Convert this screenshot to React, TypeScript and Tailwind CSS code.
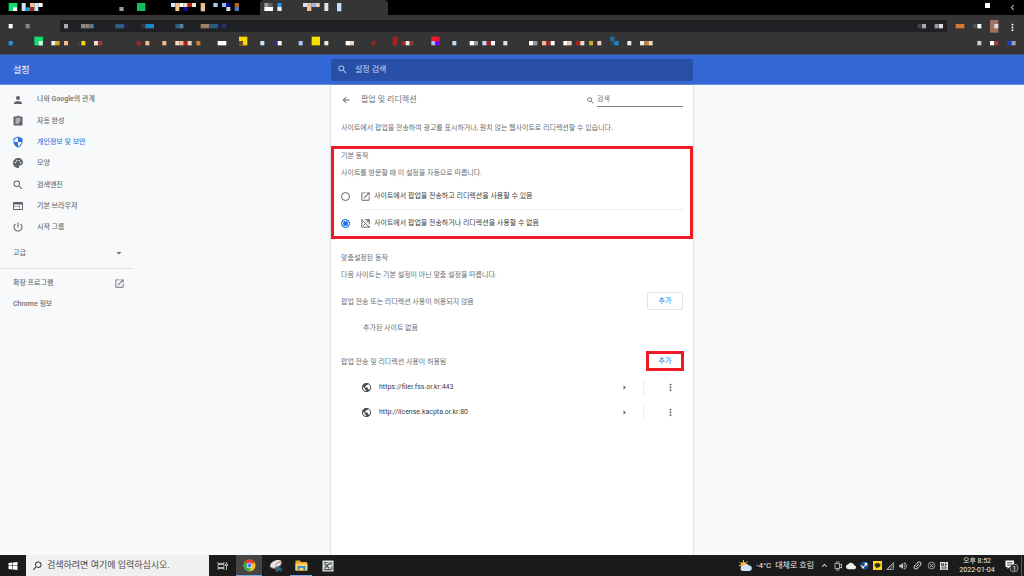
import React, { useState } from 'react';
import {
  MdArrowBack,
  MdArrowDropDown,
  MdArrowRight,
  MdAssignment,
  MdCloud,
  MdChevronLeft,
  MdExpandLess,
  MdLink,
  MdMoreVert,
  MdOpenInNew,
  MdOutlineCancel,
  MdPalette,
  MdPerson,
  MdPowerSettingsNew,
  MdPublic,
  MdSearch,
  MdSecurity,
  MdVolumeUp,
  MdWeb,
} from 'react-icons/md';
import { clsx } from 'clsx';

// x, y, width, height, colour (three units to the pixel)
type Cell = [number, number, number, number, string];

const row = (y: number, items: [number, number, string][]): Cell[] =>
  items.map(([x, w, color]) => [x, y, w, 13, color]);

const tabCells: Cell[] = [
  [26, 9, 26, 24, '#12e06c'], [39, 22, 12, 11, '#ffffff'],
  [65, 9, 12, 24, '#cfe6fa'], [77, 22, 13, 11, '#2196e8'],
  [90, 9, 13, 12, '#f3c57d'], [90, 21, 13, 12, '#a82222'],
  [103, 9, 12, 24, '#cfe6fa'], [115, 9, 13, 12, '#ffffff'],
  [358, 21, 13, 12, '#999999'], [411, 9, 25, 24, '#0fbf5c'],
  [513, 9, 13, 12, '#cfe6fa'], [526, 9, 12, 24, '#f3c58a'], [538, 9, 13, 12, '#ffffff'],
  [550, 21, 13, 12, '#0c0ca0'], [551, 9, 12, 12, '#f3dcc0'], [563, 9, 13, 12, '#a82222'],
  [576, 9, 12, 12, '#f5e6d6'], [602, 9, 13, 25, '#f0bd92'], [640, 9, 13, 12, '#a9cdf5'],
  [666, 9, 12, 12, '#8fbdf0'], [678, 9, 13, 12, '#0c0ca0'], [679, 21, 12, 12, '#cfd9ee'],
  [704, 9, 13, 12, '#b0661a'], [704, 21, 13, 12, '#4a79c0'],
];

const activeTabCells: Cell[] = [
  [13, 9, 13, 12, '#999999'], [26, 9, 12, 12, '#606060'], [13, 21, 26, 12, '#ffffff'],
  [52, 9, 13, 12, '#2196e8'], [52, 21, 13, 12, '#eeeeee'],
  [129, 9, 12, 12, '#cfe6fa'], [141, 9, 13, 24, '#f0bd92'], [154, 9, 13, 12, '#8fb8ec'],
  [167, 9, 12, 12, '#f0d0ba'], [193, 9, 12, 24, '#eee0d6'], [231, 9, 13, 25, '#c4dcf8'],
];

const navCells: Cell[] = row(27, [[26, 12, '#ffffff'], [77, 12, '#888888']]);

const addressCells: Cell[] = row(12, [
  [12, 12, '#aaaaaa'], [63, 13, '#888888'], [76, 13, '#a47a64'], [89, 12, '#4a80a0'],
  [166, 26, '#2f5f85'], [192, 12, '#1d2350'], [243, 12, '#333333'], [256, 26, '#1e87cc'],
  [346, 12, '#2b5c80'], [358, 12, '#5d7f98'], [422, 26, '#a08060'], [448, 26, '#2b5c80'],
  [474, 12, '#1a2250'], [487, 12, '#28335f'],
]);

const addressEndCells: Cell[] = row(12, [
  [2, 12, '#444444'], [15, 12, '#aaaaaa'], [53, 12, '#999999'], [66, 12, '#dddddd'],
]);

const extensionCells: Cell[] = [
  [26, 27, 26, 13, '#d97a35'], [79, 27, 10, 13, '#555555'], [91, 27, 12, 13, '#ffffff'],
  [129, 15, 25, 38, '#a0735f'], [142, 27, 12, 13, '#dddddd'],
];

const bookmarkCells: Cell[] = [
  [103, 2, 26, 26, '#12e06c'], [717, 2, 25, 26, '#f7d808'], [935, 2, 25, 26, '#f7e000'],
  [1178, 2, 14, 26, '#a82222'], [1294, 2, 25, 13, '#f01828'], [1831, 2, 12, 13, '#1a70a8'],
  ...row(15, [
    [26, 12, '#2196e8'], [116, 12, '#eeeeee'], [154, 13, '#eeeeee'], [167, 12, '#d3a722'],
    [192, 12, '#f0bd92'], [233, 6, '#444444'], [244, 12, '#f7d808'], [282, 12, '#eee0d6'],
    [295, 12, '#a63a33'], [410, 12, '#a82222'], [436, 12, '#f0bd92'], [487, 12, '#f0bd92'],
    [526, 12, '#f3dcc0'], [538, 13, '#f0bd92'], [551, 12, '#a82222'], [563, 12, '#f0d0ba'],
    [589, 12, '#d08020'], [653, 26, '#ffffff'], [717, 12, '#6b4423'],
    [781, 12, '#cfe6fa'], [820, 12, '#3a2a90'], [833, 12, '#ffffff'], [896, 12, '#a9c8f5'],
    [973, 12, '#f5e6d6'], [1037, 13, '#ffffff'], [1050, 12, '#f0d0ba'], [1114, 12, '#8a2a20'],
    [1204, 13, '#a82222'], [1217, 12, '#e6eef8'], [1229, 12, '#8a3a33'], [1294, 12, '#a9b8f5'],
    [1306, 13, '#8a00f0'], [1357, 12, '#c4dcf8'], [1409, 13, '#ffffff'], [1422, 12, '#999999'],
    [1447, 13, '#c4dcf8'], [1460, 13, '#a82222'], [1473, 12, '#ffffff'], [1510, 12, '#eee0d6'],
    [1587, 13, '#ffffff'], [1600, 12, '#999999'], [1626, 13, '#f0bd92'], [1639, 13, '#a82222'],
    [1652, 12, '#ffffff'], [1690, 13, '#ffffff'], [1703, 12, '#f0d0ba'], [1728, 13, '#a82222'],
    [1741, 12, '#f3dcc0'], [1767, 12, '#d3a722'], [1792, 12, '#f0d0c6'], [1831, 12, '#284850'],
    [1843, 13, '#1e87cc'], [1882, 12, '#eeeeee'], [1920, 13, '#eeeeee'], [1933, 13, '#d08030'],
    [1946, 12, '#f0dcc6'],
  ]),
];

const bookmarkEndCells: Cell[] = row(15, [
  [10, 12, '#cccccc'], [48, 13, '#ffffff'], [61, 12, '#a83a33'], [100, 13, '#2040d0'], [113, 12, '#a0a0b0'],
]);

interface MosaicProps {
  cells: Cell[];
  width: number;
  height: number;
}

function Mosaic({ cells, width, height }: MosaicProps) {
  return (
    <svg width={width} height={height} viewBox={`0 0 ${width * 3} ${height * 3}`} className="shrink-0" aria-hidden="true">
      {cells.map(([x, y, w, h, color]) => (
        <rect key={`${x}-${y}`} x={x} y={y} width={w} height={h} fill={color} />
      ))}
    </svg>
  );
}

function BrowserChrome() {
  return (
    <div className="border-b border-[#4a5470] bg-[#353535]">
      <div className="flex h-[15px] bg-black">
        <Mosaic cells={tabCells} width={260} height={15} />
        <div className="w-[128px] rounded-t bg-[#353535]">
          <Mosaic cells={activeTabCells} width={128} height={15} />
        </div>
        <div className="ml-auto flex items-center">
          <span className="mb-[5px] mr-[17px] size-[5px] bg-white" />
          <button type="button" aria-label="이전" className="mr-1.5 text-[#cccccc]">
            <MdChevronLeft size={11} />
          </button>
        </div>
      </div>
      <div className="flex h-[21px] items-center">
        <Mosaic cells={navCells} width={60} height={21} />
        <div className="flex h-3 flex-1 justify-between bg-[#202124]">
          <Mosaic cells={addressCells} width={180} height={12} />
          <Mosaic cells={addressEndCells} width={30} height={12} />
        </div>
        <Mosaic cells={extensionCells} width={60} height={21} />
        <button type="button" aria-label="메뉴" className="mr-1.5 mt-1 text-white">
          <MdMoreVert size={11} />
        </button>
      </div>
      <div className="flex h-[18px] justify-between">
        <Mosaic cells={bookmarkCells} width={660} height={18} />
        <Mosaic cells={bookmarkEndCells} width={50} height={18} />
      </div>
    </div>
  );
}

const menuItems = [
  { label: '나와 Google의 관계', icon: MdPerson },
  { label: '자동 완성', icon: MdAssignment },
  { label: '개인정보 및 보안', icon: MdSecurity, active: true },
  { label: '모양', icon: MdPalette },
  { label: '검색엔진', icon: MdSearch },
  { label: '기본 브라우저', icon: MdWeb },
  { label: '시작 그룹', icon: MdPowerSettingsNew },
];

function Sidebar() {
  return (
    <nav className="w-[133px] pt-1 font-medium text-[#6a6e73]">
      <div className="flex h-[149px] flex-col">
        {menuItems.map(({ label, icon: Icon, active }) => (
          <a
            key={label}
            href="#"
            className={clsx('flex flex-1 items-center gap-[13px] pl-3', active && 'text-[#3b7ddd]')}
          >
            <Icon size={12} className={active ? 'text-[#2a6fdb]' : 'text-[#5f6368]'} />
            {label}
          </a>
        ))}
      </div>
      <button type="button" className="flex h-[31px] w-full items-center justify-between border-b border-[#e3e5e8] pl-[13px] pr-2">
        고급
        <MdArrowDropDown size={12} />
      </button>
      <a href="#" className="mt-1 flex h-[21px] items-center justify-between pl-[13px] pr-2">
        확장 프로그램
        <MdOpenInNew size={11} />
      </a>
      <a href="#" className="flex h-[21px] items-center pl-[13px]">Chrome 정보</a>
    </nav>
  );
}

function PopupBlockedIcon() {
  return (
    <svg width="11" height="11" viewBox="0 0 24 24" fill="none" stroke="currentColor" strokeWidth="2" className="shrink-0">
      <path d="M10 4h10v10M20 17v3H4V4h2M20 4l-6 6M11 13l-4 4M3 3l18 18M14 4h6v6" />
    </svg>
  );
}

interface BehaviorOptionProps {
  label: string;
  icon: React.ReactNode;
  checked: boolean;
  onChange: () => void;
}

function BehaviorOption({ label, icon, checked, onChange }: BehaviorOptionProps) {
  return (
    <label className="flex h-[26px] items-center text-[#3c4043]">
      <input
        type="radio"
        name="behavior"
        checked={checked}
        onChange={onChange}
        className="size-[9px] shrink-0 appearance-none rounded-full border border-[#5f6368] checked:border-[#1a73e8] checked:bg-[#1a73e8] checked:shadow-[inset_0_0_0_1px_white]"
      />
      <span className="ml-[10px] mr-[3px] text-[#5f6368]">{icon}</span>
      {label}
    </label>
  );
}

const sites = ['https://filer.fss.or.kr:443', 'http://license.kacpta.or.kr:80'];

function SettingsPanel() {
  const [blocked, setBlocked] = useState(true);

  return (
    <main className="bg-white text-[#6a6e73] shadow-[0_0_2px_rgba(0,0,0,0.3)]">
      <div className="flex h-[30px] items-center px-[10px]">
        <button type="button" aria-label="뒤로" className="text-[#5f6368]">
          <MdArrowBack size={10} />
        </button>
        <h1 className="ml-[10px] text-[8px]">팝업 및 리디렉션</h1>
        <label htmlFor="site-search" className="ml-auto mr-[2px]">
          <MdSearch size={9} />
        </label>
        <input
          id="site-search"
          type="text"
          placeholder="검색"
          aria-label="검색"
          className="h-[14px] w-[86px] border-b border-[#80868b] pb-[2px] outline-none placeholder:text-[#757a80]"
        />
      </div>
      <p className="flex h-[31px] items-center px-[10px] pb-[5px]">
        사이트에서 팝업을 전송하여 광고를 표시하거나, 원치 않는 웹사이트로 리디렉션할 수 있습니다.
      </p>

      <section className="border-[3px] border-[#ed1c24] px-[7px]">
        <h2 className="leading-[14px]">기본 동작</h2>
        <p className="leading-[20px]">사이트를 방문할 때 이 설정을 자동으로 따릅니다.</p>
        <BehaviorOption
          label="사이트에서 팝업을 전송하고 리디렉션을 사용할 수 있음"
          icon={<MdOpenInNew size={11} />}
          checked={!blocked}
          onChange={() => setBlocked(false)}
        />
        <hr className="ml-5 border-[#eceef0]" />
        <BehaviorOption
          label="사이트에서 팝업을 전송하거나 리디렉션을 사용할 수 없음"
          icon={<PopupBlockedIcon />}
          checked={blocked}
          onChange={() => setBlocked(true)}
        />
      </section>

      <section className="px-[10px] pt-3">
        <h2 className="leading-[15px]">맞춤설정된 동작</h2>
        <p className="leading-[18px]">다음 사이트는 기본 설정이 아닌 맞춤 설정을 따릅니다.</p>
        <div className="flex h-9 items-center justify-between">
          <h3>팝업 전송 또는 리디렉션 사용이 허용되지 않음</h3>
          <button type="button" className="mb-[2px] h-[18px] w-9 rounded-xs border border-[#e3e5e8] text-[#1a73e8]">
            추가
          </button>
        </div>
        <p className="pl-[22px] leading-[16px]">추가된 사이트 없음</p>
        <div className="-mr-px mt-2 flex h-9 items-center justify-between">
          <h3>팝업 전송 및 리디렉션 사용이 허용됨</h3>
          <button type="button" className="mb-[2px] h-5 w-[38px] border-[3px] border-[#ed1c24] leading-[10px] text-[#1a73e8]">
            추가
          </button>
        </div>
        <ul className="-mt-[5px]">
          {sites.map((site) => (
            <li key={site} className="flex h-[25px] items-center pl-[20px] text-[#3c4043]">
              <MdPublic size={11} className="text-[#4a4d51]" />
              <span className="ml-[7px]">{site}</span>
              <button type="button" aria-label={`${site} 세부정보`} className="ml-auto mr-[13px] text-[#5f6368]">
                <MdArrowRight size={11} />
              </button>
              <span className="mr-[21px] h-4 w-px bg-[#eceef0]" />
              <button type="button" aria-label={`${site} 추가 작업`} className="mr-[7px] text-[#5f6368]">
                <MdMoreVert size={11} />
              </button>
            </li>
          ))}
        </ul>
      </section>
    </main>
  );
}

function WindowsLogo() {
  return (
    <svg width="10" height="10" viewBox="0 0 20 20" fill="white">
      <path d="M1 4l8-1v6H1zM10 3l9-1v7h-9zM1 10h8v7l-8-1zM10 10h9v8l-9-1z" />
    </svg>
  );
}

function TaskViewIcon() {
  return (
    <svg width="11" height="10" viewBox="0 0 22 20" fill="none" stroke="#d8d8d8" strokeWidth="1.6">
      <path d="M2 2v3h12V2M2 18v-3h12v3M2 7h12v6H2zM19 2v3M19 9v9M17 6h4v3h-4z" />
    </svg>
  );
}

function ChromeLogo() {
  return (
    <svg width="13" height="13" viewBox="0 0 48 48">
      <circle cx="24" cy="24" r="22" fill="#fbc116" />
      <path d="M24 24L5 13a22 22 0 0 1 38 0z" fill="#e53a2e" />
      <path d="M24 24L5 13a22 22 0 0 0 17 33l11-17z" fill="#2da94f" />
      <circle cx="24" cy="24" r="10.5" fill="white" />
      <circle cx="24" cy="24" r="8" fill="#4285f4" />
    </svg>
  );
}

function SnipIcon() {
  return (
    <svg width="14" height="13" viewBox="0 0 28 26">
      <path d="M2 14C3 6 12 1 21 2c5 1 5 6 2 10-4 5-20 9-21 2z" fill="#e6e2df" />
      <path d="M14 11c3-5 8-6 10-4M3 16c4 5 11 3 15 0" stroke="#c9694b" strokeWidth="2" fill="none" />
      <path d="M13 13l10 9M24 13l-9 9" stroke="#2d7fb8" strokeWidth="2" />
      <circle cx="23" cy="21" r="2.5" fill="none" stroke="#2d7fb8" strokeWidth="2" />
      <circle cx="16" cy="22" r="2.5" fill="none" stroke="#2d7fb8" strokeWidth="2" />
    </svg>
  );
}

function FolderIcon() {
  return (
    <svg width="13" height="11" viewBox="0 0 26 22">
      <path d="M1 1h9l2 3h12v17H1z" fill="#e9a928" />
      <path d="M1 7h24v14H1z" fill="#fbd266" />
      <path d="M5 21v-9h16v9h-4v-5H9v5z" fill="#3b93d9" />
    </svg>
  );
}

function CaptureIcon() {
  return (
    <svg width="12" height="12" viewBox="0 0 24 24">
      <path d="M1 1h22v22H1z" fill="#dde3df" />
      <path d="M4 5h7M4 19h15M20 13v6M5 8l10 9M14 7l-9 10" stroke="#4b5650" strokeWidth="2.5" fill="none" />
      <path d="M14 4h6v6h-6z" fill="#7d9488" />
    </svg>
  );
}

function WeatherIcon() {
  return (
    <svg width="13" height="12" viewBox="0 0 26 24">
      <circle cx="9" cy="10" r="6" fill="#f8b92e" />
      <path d="M9 0v4M1 4l3 3M17 3l-3 3M0 11h3" stroke="#f8b92e" strokeWidth="2" />
      <path d="M8 22a5 5 0 0 1 0-10 7 7 0 0 1 12-1 5.5 5.5 0 0 1 0 11z" fill="#cfe4f7" />
    </svg>
  );
}

function TrayIcons() {
  return (
    <>
      <MdExpandLess size={11} />
      <svg width="8" height="10" viewBox="0 0 16 20" fill="none" stroke="#d0d0d0" strokeWidth="1.6">
        <path d="M4 2h7M2 5h9v10H2zM11 8l4-2v8l-4-2M4 18h7" />
      </svg>
      <MdCloud size={10} />
      <svg width="9" height="9" viewBox="0 0 18 18">
        <circle cx="9" cy="9" r="8" fill="#1b4f91" />
        <path d="M1 9l6 3 5-4" stroke="white" strokeWidth="2" fill="none" />
        <circle cx="12" cy="6" r="3" fill="white" />
        <circle cx="6" cy="13" r="2" fill="white" />
      </svg>
      <svg width="9" height="9" viewBox="0 0 18 18">
        <path d="M0 0h18v18H0z" fill="#fcd51c" />
        <path d="M9 4c4 0 6 2 6 4s-2 5-6 5l-3 2v-3c-2-1-3-2-3-4 0-2 2-4 6-4z" fill="#33281a" />
      </svg>
      <svg width="8" height="8" viewBox="0 0 16 16" fill="none" stroke="#b5b5b5" strokeWidth="1.5">
        <path d="M1 15L15 1v14zM5 15c0-4 4-8 10-9M9 15c0-3 3-5 6-5" />
      </svg>
      <MdVolumeUp size={10} className="text-[#c4c4c4]" />
      <MdLink size={11} className="-rotate-45" />
      <MdOutlineCancel size={9} className="text-[#a8a8a8]" />
      <svg width="8" height="8" viewBox="0 0 16 16">
        <path d="M0 0h16v16H0z" fill="#e4e4e4" />
        <path d="M3 2v5h4V2M3 4h4M11 1v8M11 5h3M4 10h8v4H4z" stroke="#333333" strokeWidth="1.5" fill="none" />
      </svg>
    </>
  );
}

function Taskbar() {
  return (
    <footer className="flex h-[21px] items-center bg-[#1b1b1b] text-[#eeeeee]">
      <button type="button" aria-label="시작" className="flex w-[26px] justify-center">
        <WindowsLogo />
      </button>
      <label className="flex h-full w-[183px] items-center bg-[#f0f0f0] pl-[5px] text-[#444444]">
        <MdSearch size={12} className="-scale-x-100" />
        <input
          type="text"
          aria-label="검색"
          placeholder="검색하려면 여기에 입력하십시오."
          className="ml-1 min-w-0 flex-1 text-[9px] outline-none placeholder:text-[#4a4a4a]"
        />
      </label>
      <button type="button" aria-label="작업 보기" className="flex w-[27px] justify-center">
        <TaskViewIcon />
      </button>
      <button type="button" aria-label="Chrome" className="flex h-full w-[26px] items-center justify-center border-b border-[#76a9e0] bg-[#454545]">
        <ChromeLogo />
      </button>
      <button type="button" aria-label="캡처 도구" className="flex w-[27px] justify-center">
        <SnipIcon />
      </button>
      <button type="button" aria-label="파일 탐색기" className="mx-px flex h-full w-[22px] items-center justify-center border-b border-[#76a9e0]">
        <FolderIcon />
      </button>
      <button type="button" aria-label="캡처" className="flex w-[30px] justify-center">
        <CaptureIcon />
      </button>
      <div className="ml-auto flex items-center">
        <WeatherIcon />
        <span className="ml-1 mr-[5px] whitespace-nowrap text-[8px]">-4°C&nbsp; 대체로 흐림</span>
        <div className="mr-[2px] flex items-center gap-1">
          <TrayIcons />
        </div>
        <div className="ml-2 w-[38px] whitespace-nowrap text-center leading-[9px]">
          <div>오후 8:52</div>
          <div>2022-01-04</div>
        </div>
        <button type="button" aria-label="알림" className="ml-[9px] mr-[2px] flex">
          <svg width="14" height="14" viewBox="0 0 28 28">
            <path d="M1 3h17v13H9l-4 4v-4H1z" fill="white" />
            <path d="M4 7h11M4 10h11M4 13h7" stroke="#555555" strokeWidth="1.5" />
            <circle cx="18" cy="18" r="8" fill="#2b2b2b" stroke="#aaaaaa" strokeWidth="1.5" />
            <text x="15" y="23" fontSize="13" fill="white">1</text>
          </svg>
        </button>
        <span className="mr-[2px] h-[21px] w-px bg-[#555555]" />
      </div>
    </footer>
  );
}

export default function App() {
  return (
    <div className="flex min-h-screen flex-col bg-[#f8f9fa] font-[Roboto,'Noto_Sans_CJK_KR',sans-serif] text-[7px]">
      <BrowserChrome />
      <header className="grid h-[30px] grid-cols-[1fr_minmax(0,362px)_1fr] items-center border-b border-[#6f95e6] bg-[#3367d6] text-white">
        <h1 className="pl-[13px] pt-[2px] text-[9px]">설정</h1>
        <label className="flex h-[22px] items-center rounded-xs bg-[#2850a7] pl-[6px]">
          <MdSearch size={11} className="text-[#c5d3ee]" />
          <input
            type="text"
            aria-label="설정 검색"
            placeholder="설정 검색"
            className="ml-[7px] min-w-0 flex-1 text-[8px] outline-none placeholder:text-[#c5d3ee]"
          />
        </label>
      </header>
      <div className="grid flex-1 grid-cols-[1fr_minmax(0,362px)_1fr]">
        <Sidebar />
        <SettingsPanel />
      </div>
      <Taskbar />
    </div>
  );
}
